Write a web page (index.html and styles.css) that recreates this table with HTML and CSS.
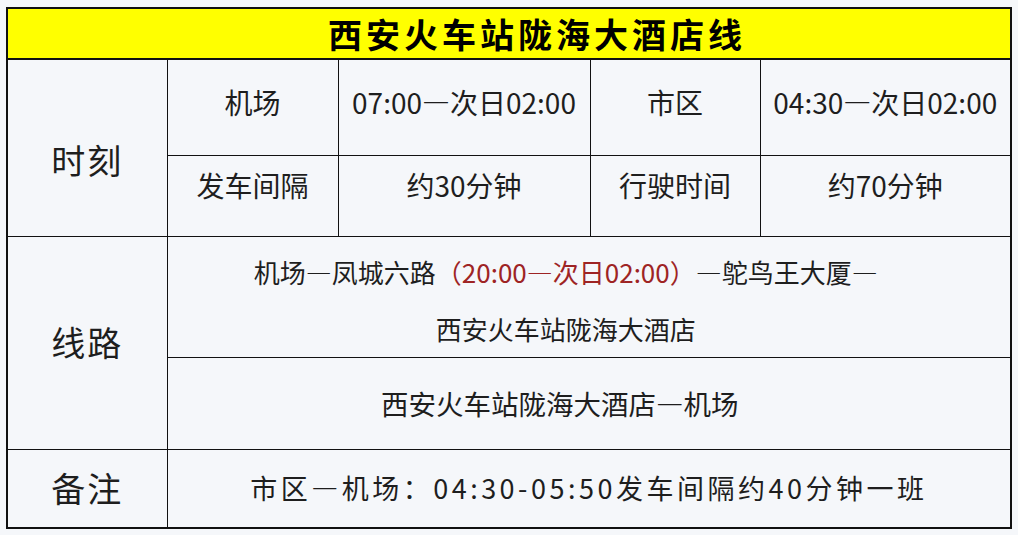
FILE: index.html
```html
<!DOCTYPE html>
<html lang="zh-CN">
<head>
<meta charset="utf-8">
<title>西安火车站陇海大酒店线</title>
<link rel="stylesheet" href="styles.css">
</head>
<body>
<table class="bus">
  <colgroup>
    <col class="c1"><col class="c2"><col class="c3"><col class="c4"><col class="c5">
  </colgroup>
  <tr class="r-head"><th colspan="5" class="title">西安火车站陇海大酒店线</th></tr>
  <tr class="r1">
    <td rowspan="2" class="label label-time">时刻</td>
    <td>机场</td>
    <td>07:00—次日02:00</td>
    <td>市区</td>
    <td>04:30—次日02:00</td>
  </tr>
  <tr class="r2">
    <td>发车间隔</td>
    <td>约30分钟</td>
    <td>行驶时间</td>
    <td>约70分钟</td>
  </tr>
  <tr class="r3">
    <td rowspan="2" class="label">线路</td>
    <td colspan="4" class="route">机场—凤城六路<span class="red">（20:00—次日02:00）</span>—鸵鸟王大厦—<br>西安火车站陇海大酒店</td>
  </tr>
  <tr class="r4">
    <td colspan="4" class="back">西安火车站陇海大酒店—机场</td>
  </tr>
  <tr class="r5">
    <td class="label">备注</td>
    <td colspan="4" class="note">市区—机场：04:30-05:50发车间隔约40分钟一班</td>
  </tr>
</table>
</body>
</html>
```
FILE: styles.css
```css
html, body {
  margin: 0;
  padding: 0;
  background: #f5f7fa;
}
body {
  padding: 7px 0 0 6px;
  font-family: "Noto Sans CJK SC", "Noto Sans", sans-serif;
  color: #1e1e1e;
}
.bus {
  border-collapse: collapse;
  table-layout: fixed;
  width: 1006px;
  border: 2px solid #111;
}
.c1 { width: 160px; }
.c2 { width: 171px; }
.c3 { width: 252px; }
.c4 { width: 170px; }
.c5 { width: 251px; }
.bus th, .bus td {
  border: 1px solid #111;
  text-align: center;
  vertical-align: middle;
  padding: 0;
  font-size: 26px;
  font-weight: 400;
  line-height: 1.2;
}
.bus th.title {
  background: #ffff00;
  font-size: 34px;
  font-weight: 700;
  letter-spacing: 4px;
  color: #000;
  border-bottom: 2px solid #111;
  padding-left: 56px;
  line-height: 1;
}
.r-head { height: 51px; }
.r1 { height: 96px; }
.r2 { height: 81px; }
.r3 { height: 121px; }
.r4 { height: 92px; }
.r5 { height: 79px; }
.r1 td, .r2 td { font-size: 28px; }
.r1 td { padding-bottom: 8px; }
.r2 td { padding-bottom: 19px; }
.bus td.label {
  font-size: 34px;
  letter-spacing: 2px;
  padding-bottom: 0;
}
.bus td.label-time {
  padding-top: 26px;
}
.bus td.route {
  line-height: 57px;
  font-size: 26px;
  padding: 6px 46px 0 0;
}
.bus td.back {
  font-size: 27.5px;
  padding-right: 58px;
}
.red { color: #9e2424; }
.bus td.note {
  letter-spacing: 3.5px;
  font-size: 27px;
}
```
